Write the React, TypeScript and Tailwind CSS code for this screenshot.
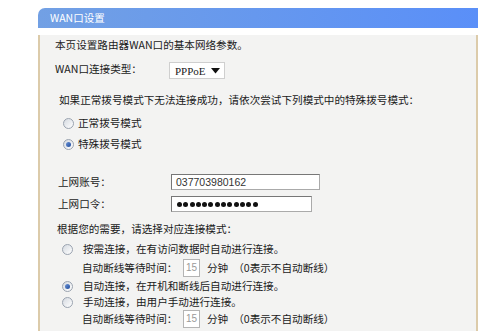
import React from "react";

const font = { fontFamily: '"Noto Sans CJK SC", "Liberation Sans", sans-serif' };

function Radio({ checked }: { checked?: boolean }) {
  return (
    <span className="inline-flex w-[11px] h-[11px] rounded-full border border-[#9aa3b0] bg-gradient-to-br from-[#d5dae1] to-[#ffffff] items-center justify-center shrink-0">
      {checked && (
        <span className="w-[5px] h-[5px] rounded-full bg-gradient-to-br from-[#6b93d6] to-[#1f4b9c]" />
      )}
    </span>
  );
}

function WaitRow() {
  return (
    <div className="flex items-center h-[18px] pl-[27px]">
      <span className="w-[101px]">自动断线等待时间：</span>
      <span
        className="w-[17px] h-[18px] border border-[#b4b4b4] bg-white text-[#9a9a9a] text-[10px] flex items-center justify-center"
        style={{ fontFamily: '"Liberation Sans", sans-serif' }}
      >
        15
      </span>
      <span className="ml-[7px]">分钟</span>
      <span className="ml-[5px]">（0表示不自动断线）</span>
    </div>
  );
}

export default function App() {
  return (
    <div className="w-[500px] h-[331px] bg-white overflow-hidden text-[10.6px] leading-[14px] text-[#1a1a1a]" style={font}>
      <div className="ml-[38px] mt-[8px] w-[440px]">
        <div className="h-[20px] rounded-tl-[7px] bg-gradient-to-r from-[#72a0e4] to-[#5a8ff8] text-white text-[10.5px] flex items-center pl-[12px]">
          WAN口设置
        </div>
        <div className="h-[303px] bg-[#f3f3f2] border-l-2 border-r-2 border-[#dccbaa] pl-[15px]">
          <div className="h-[20px] mt-[7px] flex items-center">本页设置路由器WAN口的基本网络参数。</div>
          <div className="h-[20px] mt-[4px] flex items-center">
            <span className="w-[114px]">WAN口连接类型：</span>
            <span
              className="mt-[3px] w-[56px] h-[17px] border border-[#cfcfcf] bg-white flex items-center pl-[5px] pr-[4px] justify-between text-[11px]"
              style={{ fontFamily: '"Liberation Serif", serif' }}
            >
              PPPoE
              <svg width="9" height="6" viewBox="0 0 9 6"><path d="M0 0 L9 0 L4.5 5.5 Z" fill="#111" /></svg>
            </span>
          </div>
          <div className="h-[20px] mt-[11px] flex items-center pl-[4px]">如果正常拨号模式下无法连接成功，请依次尝试下列模式中的特殊拨号模式：</div>
          <div className="h-[22px] mt-[2px] flex items-center pl-[8px] gap-[4px]">
            <Radio />
            <span>正常拨号模式</span>
          </div>
          <div className="h-[20px] flex items-center pl-[8px] gap-[4px]">
            <Radio checked />
            <span>特殊拨号模式</span>
          </div>
          <div className="h-[20px] mt-[18px] flex items-center pl-[3px]">
            <span className="w-[113px]">上网账号：</span>
            <span className="w-[149px] h-[16px] border border-[#777] border-b-[#aaa] border-r-[#aaa] bg-white flex items-center pl-[4px] text-[10.5px] text-[#333]" style={{ fontFamily: '"Liberation Sans", sans-serif' }}>
              037703980162
            </span>
          </div>
          <div className="h-[20px] mt-[2px] flex items-center pl-[3px]">
            <span className="w-[113px]">上网口令：</span>
            <span className="w-[141px] h-[16px] border border-[#777] border-b-[#aaa] border-r-[#aaa] bg-white flex items-center pl-[5px]">
              {Array.from({ length: 13 }).map((_, i) => (
                <span key={i} className="w-[5px] h-[5px] rounded-full bg-[#111] mr-[1.3px]" />
              ))}
            </span>
          </div>
          <div className="h-[20px] mt-[5px] flex items-center pl-[2px]">根据您的需要，请选择对应连接模式：</div>
          <div className="h-[18px] mt-[1px] flex items-center pl-[7px] gap-[10px]">
            <Radio />
            <span>按需连接，在有访问数据时自动进行连接。</span>
          </div>
          <div className="mt-[1px]"><WaitRow /></div>
          <div className="h-[16px] mt-[1px] flex items-center pl-[7px] gap-[10px]">
            <Radio checked />
            <span>自动连接，在开机和断线后自动进行连接。</span>
          </div>
          <div className="h-[16px] flex items-center pl-[7px] gap-[10px]">
            <Radio />
            <span>手动连接，由用户手动进行连接。</span>
          </div>
          <WaitRow />
        </div>
      </div>
    </div>
  );
}
